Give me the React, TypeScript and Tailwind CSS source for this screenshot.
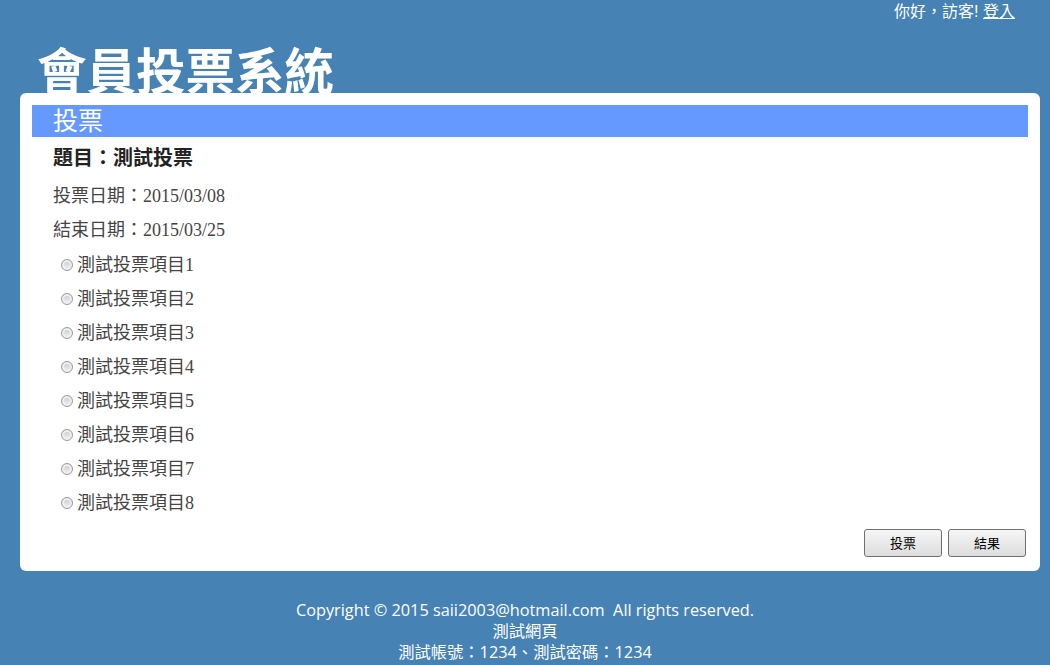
import React from 'react'

const items = [
  '測試投票項目1',
  '測試投票項目2',
  '測試投票項目3',
  '測試投票項目4',
  '測試投票項目5',
  '測試投票項目6',
  '測試投票項目7',
  '測試投票項目8',
]

function Radio() {
  return (
    <span className="inline-block w-[12px] h-[12px] rounded-full border border-[#9a9a9a] bg-gradient-to-b from-[#c8c8c8] to-[#f4f4f4] shadow-[inset_0_0_0_2px_#f0f0f0]" />
  )
}

function Button({ label }: { label: string }) {
  return (
    <button className="w-[78px] h-[28px] rounded-[3px] border border-[#707070] bg-gradient-to-b from-[#f6f6f6] to-[#dddddd] text-[13px] text-black leading-none">
      {label}
    </button>
  )
}

export default function App() {
  return (
    <div className="h-screen overflow-hidden bg-[#4682b4] font-['Liberation_Serif','Noto_Sans_CJK_TC',serif]">
      {/* Header */}
      <div className="h-[93px] relative">
        <div className="flex justify-end pr-[35px] pt-[2px] text-[16px] leading-[20px] text-white font-['Liberation_Sans','Noto_Sans_CJK_TC',sans-serif]">
          <span>你好，訪客!&nbsp;</span>
          <a className="underline">登入</a>
        </div>
        <h1 className="pl-[37px] pt-[18px] text-[49.5px] leading-[58px] font-bold text-white font-['Noto_Sans_CJK_TC',sans-serif] whitespace-nowrap">
          會員投票系統
        </h1>
      </div>

      {/* Panel */}
      <div className="relative z-10 ml-[20px] mr-[10px] bg-white rounded-[6px] px-[12px] pt-[12px] pb-[14px]">
        <div className="h-[32px] bg-[#6699ff] pl-[21px] flex items-center text-white text-[25px] leading-none">
          投票
        </div>
        <div className="pl-[21px]">
          <div className="h-[42px] flex items-center text-[20px] font-bold text-[#222]">
            題目：測試投票
          </div>
          <div className="h-[34px] flex items-center text-[18px] text-[#444]">
            投票日期：2015/03/08
          </div>
          <div className="h-[34px] flex items-center text-[18px] text-[#444]">
            結束日期：2015/03/25
          </div>
          <div className="mt-[1px]">
            {items.map((item) => (
              <label key={item} className="h-[34px] flex items-center gap-[4px] pl-[8px] text-[18px] text-[#444]">
                <Radio />
                <span>{item}</span>
              </label>
            ))}
          </div>
        </div>
        <div className="flex justify-end gap-[6px] mt-[9px] pr-[2px]">
          <Button label="投票" />
          <Button label="結果" />
        </div>
      </div>

      {/* Footer */}
      <div className="pt-[29px] text-center text-white text-[16.3px] leading-[21px] font-['Open_Sans','Noto_Sans_CJK_TC',sans-serif]">
        <div className="whitespace-pre">Copyright © 2015 saii2003@hotmail.com  All rights reserved.</div>
        <div>測試網頁</div>
        <div>測試帳號：1234、測試密碼：1234</div>
      </div>
    </div>
  )
}
